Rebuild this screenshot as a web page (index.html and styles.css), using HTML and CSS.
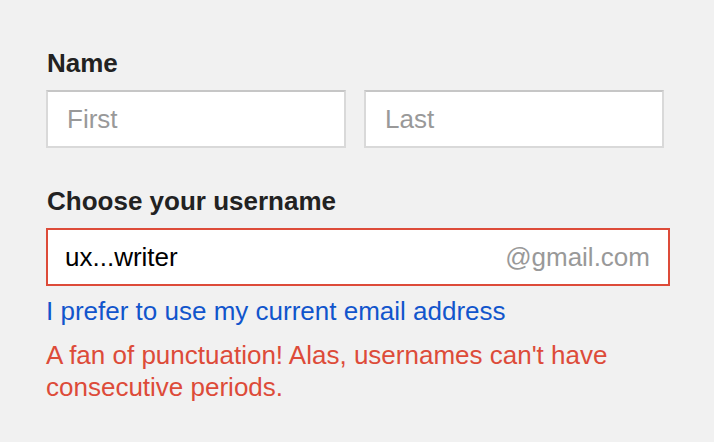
FILE: index.html
```html
<!DOCTYPE html>
<html>
<head>
<meta charset="utf-8">
<link rel="stylesheet" href="styles.css">
</head>
<body>
<form class="form">
  <div class="label">Name</div>
  <div class="name-row">
    <div class="field"><span class="placeholder">First</span></div>
    <div class="field"><span class="placeholder">Last</span></div>
  </div>
  <div class="label label-user">Choose your username</div>
  <div class="field field-error username">
    <span class="value">ux...writer</span>
    <span class="suffix">@gmail.com</span>
  </div>
  <a class="link">I prefer to use my current email address</a>
  <div class="error">A fan of punctuation! Alas, usernames can't have consecutive periods.</div>
</form>
</body>
</html>
```
FILE: styles.css
```css
html, body {
  margin: 0;
  padding: 0;
  background: #f1f1f1;
}
body {
  font-family: "Liberation Sans", Arial, sans-serif;
  font-size: 26px;
  color: #222;
}
.form {
  display: flex;
  flex-direction: column;
  align-items: flex-start;
  padding: 48px 0 0 46px;
}
.label {
  font-weight: bold;
  line-height: 30px;
  margin-left: 1px;
  margin-bottom: 12px;
}
.label-user {
  margin-top: 38px;
}
.name-row {
  display: flex;
  gap: 18px;
}
.field {
  box-sizing: border-box;
  width: 300px;
  height: 58px;
  background: #fff;
  border: 2px solid #d9d9d9;
  border-top-color: #c6c6c6;
  display: flex;
  align-items: center;
  padding: 0 18px 0 19px;
}
.placeholder {
  color: #999;
}
.username {
  width: 624px;
  justify-content: space-between;
  border-color: #dd4b39;
  padding: 0 18px 0 17px;
}
.value {
  color: #000;
}
.suffix {
  color: #999;
}
.link {
  color: #1155cc;
  line-height: 30px;
  margin-top: 10px;
  cursor: pointer;
}
.error {
  color: #dd4b39;
  line-height: 32px;
  margin-top: 13px;
  width: 600px;
}
```
